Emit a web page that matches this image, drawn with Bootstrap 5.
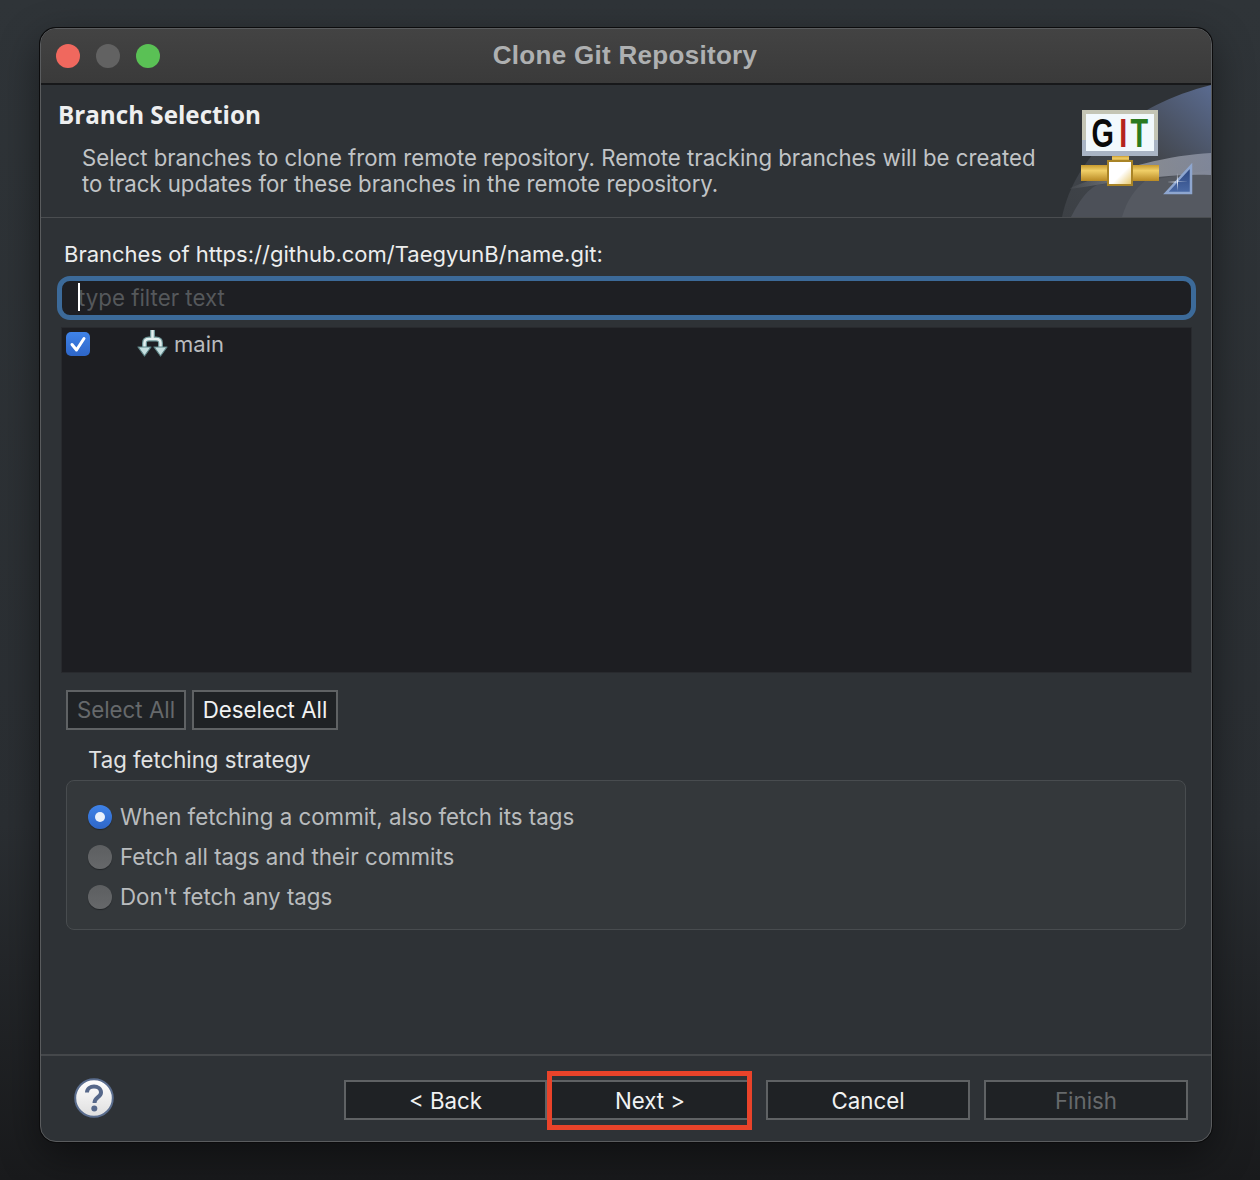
<!DOCTYPE html>
<html lang="en">
<head>
<meta charset="utf-8">
<title>Clone Git Repository</title>
<link href="https://cdn.jsdelivr.net/npm/bootstrap@5.3.0/dist/css/bootstrap.min.css" rel="stylesheet">
<style>
html,body{height:100%;margin:0}
body{background:linear-gradient(180deg,#2f3438 0%,#2a2e32 70%,#191a1c 100%);font-family:Inter,"Liberation Sans",sans-serif;font-size:22px;color:#d9dadb;overflow:hidden}
.stage{padding:28px 48px 0 40px;height:1180px}
.win{width:1172px;height:1114px;background:#2e3236;border:1px solid #5a5c5e;border-radius:16px;overflow:hidden;box-shadow:0 0 0 1px #0c0c0d,0 14px 40px rgba(0,0,0,.45);display:flex;flex-direction:column}
.tbar{height:56px;background:linear-gradient(#434343,#3a3a3a);border-bottom:2px solid #17181a;flex:none;padding-left:15px;gap:16px}
.dot{width:24px;height:24px;border-radius:50%;flex:none}
.ttl{left:0;right:0;text-align:center;color:#aeb0b1;font:700 26px "Liberation Sans",sans-serif;letter-spacing:.3px;margin-top:-2px;padding-right:2px}
.hdr{height:133px;border-bottom:1px solid #4a4d50;flex:none}
.hdr h1{font:700 24.2px "Open Sans","DejaVu Sans",sans-serif;color:#eeeff0;margin:14px 0 0 17px;line-height:32px;letter-spacing:0}
.hdr p{margin:14px 0 0 41px;line-height:26px;color:#c1c4c6;font-size:22.2px;white-space:nowrap}
.bnr{flex:none;display:block}
.cnt{padding:21px 15px 0 16px;flex:1;min-height:0}
.lbl{margin:0 0 7px 7px;line-height:30px;color:#eceded;font-size:22px}
.flt{height:44px;border:5px solid #3c6a99;border-radius:13px;background:#1e1f23;margin-bottom:7px;padding-left:16px;color:#55585b;line-height:34px;position:relative;font-size:22.3px}
.flt::before{content:"";position:absolute;left:16px;top:2px;width:2px;height:28px;background:#fff}
.blist{height:346px;margin:0 4px;background:#1d1e22;border:1px solid #282a2e;padding-left:4px;padding-top:2px}
.cbx{width:24px;height:24px;border-radius:5px;background:linear-gradient(#3f83e8,#2e66c8);flex:none;display:block}
.bicon{flex:none;margin:0 6px 0 47px}
.bname{color:#b9bcbf;line-height:28px}
.btrow{margin:17px 0 0 9px;gap:6px}
.mbtn{height:40px;background:#1f2225;border:2px solid #5f6264;border-radius:0;color:#f1f2f2;padding:0;font-size:22.3px;line-height:34px;text-align:center}
.mbtn:disabled{background:#1f2225;color:#66696b;border-color:#5f6264;opacity:1}
.w120{width:120px}.w146{width:146px}.w203{width:203px}.w204{width:204px}
.grp{margin:0 10px 0 9px;height:150px;background:#34383b;border:1px solid #484c4f;border-radius:8px;padding:16px 21px}
.gttl{margin:15px 0 5px 31px;line-height:30px;color:#e1e2e3;font-size:22.2px}
.rdo{height:40px;gap:8px;color:#b9bcbe;font-size:22.3px}
.rc{width:24px;height:24px;border-radius:50%;background:linear-gradient(#5d5f61,#66686a);box-shadow:0 1px 1px rgba(0,0,0,.35);flex:none}
.rc.on{background:linear-gradient(#3f83e8,#2e66c8);position:relative}
.rc.on::after{content:"";position:absolute;left:7px;top:7px;width:10px;height:10px;border-radius:50%;background:#e9f0fb}
.ftr{height:87px;flex:none;border-top:2px solid #45484b;padding:24px 23px 0 33px}
.ftr .mbtn{padding-top:1px}
.hlp{flex:none;margin-top:-2px}
.nxt{position:relative;padding-left:3px!important}
.nxt::after{content:"";position:absolute;left:-2px;right:-4px;top:-11px;bottom:-12px;border:5px solid #e9432a;pointer-events:none}
.ml16{margin-left:16px}.ml14{margin-left:14px}
</style>
</head>
<body>
<div class="stage">
<div class="win">
  <div class="tbar d-flex align-items-center position-relative">
    <span class="dot" style="background:#f0685e"></span>
    <span class="dot" style="background:#626262"></span>
    <span class="dot" style="background:#5ac155"></span>
    <span class="ttl position-absolute">Clone Git Repository</span>
  </div>
  <div class="hdr d-flex justify-content-between">
    <div>
      <h1>Branch Selection</h1>
      <p>Select branches to clone from remote repository. Remote tracking branches will be created<br>to track updates for these branches in the remote repository.</p>
    </div>
    <svg class="bnr" width="150" height="132" viewBox="0 0 150 132">
      <defs>
        <linearGradient id="pipe" x1="0" y1="0" x2="0" y2="1"><stop offset="0" stop-color="#c99a2e"/><stop offset=".35" stop-color="#f0cf68"/><stop offset="1" stop-color="#b98a24"/></linearGradient>
        <linearGradient id="box" x1="0" y1="0" x2="1" y2="1"><stop offset="0" stop-color="#fff"/><stop offset=".55" stop-color="#fff"/><stop offset="1" stop-color="#e6c565"/></linearGradient>
        <linearGradient id="bg" x1="0" y1="1" x2="1" y2="0"><stop offset="0" stop-color="#3c4045"/><stop offset=".55" stop-color="#43474e"/><stop offset="1" stop-color="#5a6b90"/></linearGradient>
        <linearGradient id="hl" x1="0" y1="0" x2="1" y2="0"><stop offset="0" stop-color="#8b8e93" stop-opacity=".1"/><stop offset=".5" stop-color="#9a9da3"/><stop offset="1" stop-color="#8c93a6"/></linearGradient>
        <linearGradient id="tri" x1="0" y1="0" x2="0" y2="1"><stop offset="0" stop-color="#29437c"/><stop offset="1" stop-color="#4b6aa5"/></linearGradient>
      </defs>
      <path d="M1 132C14 70 70 20 150 0V132Z" fill="url(#bg)"/>
      <path d="M10 132C20 112 28 104 36 100L150 85V132Z" fill="#4c5058"/>
      <path d="M61 132C66 115 74 104 84 96L150 85V132Z" fill="#555961"/>
      <path d="M9 103C60 82 110 70 150 68V90C110 88 60 96 9 104Z" fill="url(#hl)" opacity=".8"/>
      <rect x="21" y="25" width="76" height="46" fill="#c4c5b5"/>
      <rect x="21" y="55" width="76" height="16" fill="#a9b4c4"/>
      <rect x="25" y="29" width="68" height="37" fill="#f2f9fd"/>
      <text transform="scale(.72 1)" y="62" font-family="Liberation Sans,sans-serif" font-size="40" font-weight="700"><tspan x="42.500" fill="#0a0a0a">G</tspan><tspan x="81" fill="#b4231d">I</tspan><tspan x="96.500" fill="#2b7a1f">T</tspan></text>
      <rect x="51" y="71" width="17" height="6" fill="url(#pipe)"/>
      <rect x="20" y="80" width="78" height="16" fill="url(#pipe)"/>
      <rect x="47" y="76" width="24" height="24" fill="url(#box)" stroke="#a98426" stroke-width="2"/>
      <path d="M105 108L130 81V108Z" fill="url(#tri)" stroke="#8ea6cf" stroke-width="2.5"/>
      <path d="M116 88V106L117 97H127L117 96.500L116 88L115 96.500L106 97L115 97.500Z" fill="#e6ecf6"/>
    </svg>
  </div>
  <div class="cnt">
    <div class="lbl">Branches of https://github.com/TaegyunB/name.git:</div>
    <div class="flt">type filter text</div>
    <div class="blist">
      <div class="d-flex align-items-center">
        <svg class="cbx" viewBox="0 0 24 24"><path d="M6 12.500L10.500 18L18 6.500" fill="none" stroke="#fff" stroke-width="3" stroke-linecap="round" stroke-linejoin="round"/></svg>
        <svg class="bicon" width="31" height="28" viewBox="0 0 31 28">
          <path d="M15.500 0V8M7.500 18V13C7.500 10 9 9 12 9H19C22 9 23.500 10 23.500 13V18" fill="none" stroke="#6f9799" stroke-width="5"/>
          <path d="M15.500 0V8M7.500 18V13C7.500 10 9 9 12 9H19C22 9 23.500 10 23.500 13V18" fill="none" stroke="#e3f0f0" stroke-width="2.500"/>
          <path d="M1 17H14L7.500 26ZM17 17H30L23.500 26Z" fill="#c4dedf" stroke="#5d8487" stroke-width="1.200" stroke-linejoin="round"/>
        </svg>
        <span class="bname">main</span>
      </div>
    </div>
    <div class="btrow d-flex">
      <button class="btn mbtn w120" disabled>Select All</button>
      <button class="btn mbtn w146">Deselect All</button>
    </div>
    <div class="gttl">Tag fetching strategy</div>
    <div class="grp">
      <div class="rdo d-flex align-items-center"><span class="rc on"></span><span>When fetching a commit, also fetch its tags</span></div>
      <div class="rdo d-flex align-items-center"><span class="rc"></span><span>Fetch all tags and their commits</span></div>
      <div class="rdo d-flex align-items-center"><span class="rc"></span><span>Don't fetch any tags</span></div>
    </div>
  </div>
  <div class="ftr d-flex justify-content-between">
    <svg class="hlp" width="40" height="40" viewBox="0 0 40 40">
      <defs><linearGradient id="hp" x1="0" y1="0" x2="0" y2="1"><stop offset="0" stop-color="#fff"/><stop offset="1" stop-color="#dedede"/></linearGradient></defs>
      <circle cx="20" cy="20" r="18.800" fill="url(#hp)" stroke="#5a6d8e" stroke-width="2"/>
      <path d="M13 14.500C13 6.500 27 6.500 27 14.500C27 19.500 20.500 19 20.500 25" fill="none" stroke="#56688a" stroke-width="4"/>
      <circle cx="20.300" cy="30.500" r="3" fill="#56688a"/>
    </svg>
    <div class="d-flex">
      <button class="btn mbtn w203">&lt; Back</button>
      <button class="btn mbtn w203 nxt">Next &gt;</button>
      <button class="btn mbtn w204 ml16">Cancel</button>
      <button class="btn mbtn w204 ml14" disabled>Finish</button>
    </div>
  </div>
</div>
</div>
</body>
</html>
